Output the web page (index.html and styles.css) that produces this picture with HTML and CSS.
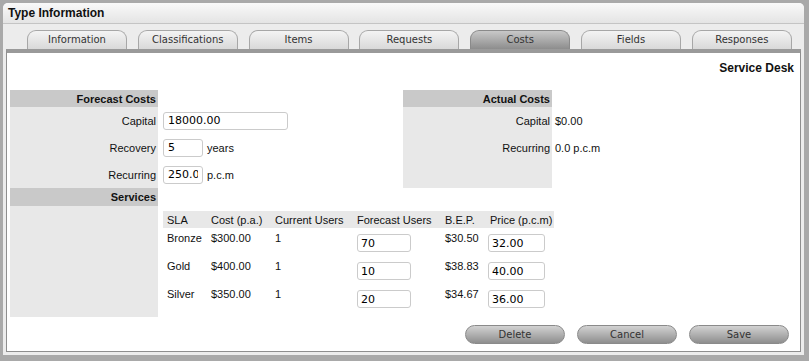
FILE: index.html
```html
<!DOCTYPE html>
<html>
  <head>
    <meta charset="utf-8">
    <title>Type Information</title>
    <link rel="stylesheet" href="styles.css">
  </head>
  <body>
    <div class="panel">
      <div class="panel-title">Type Information</div>
      <div class="tabs">
        <div class="tab">Information</div>
        <div class="tab">Classifications</div>
        <div class="tab">Items</div>
        <div class="tab">Requests</div>
        <div class="tab active">Costs</div>
        <div class="tab">Fields</div>
        <div class="tab">Responses</div>
      </div>
      <div class="content">
        <div class="context">Service Desk</div>

        <div class="costs">
          <div class="form forecast">
            <div class="label head">Forecast Costs</div>
            <div class="value"></div>
            <div class="label">Capital</div>
            <div class="value"><input class="wide" type="text" value="18000.00"></div>
            <div class="label">Recovery</div>
            <div class="value"><input class="short" type="text" value="5"> years</div>
            <div class="label">Recurring</div>
            <div class="value"><input class="short" type="text" value="250.00"> p.c.m</div>
          </div>
          <div class="form actual">
            <div class="label head">Actual Costs</div>
            <div class="value"></div>
            <div class="label">Capital</div>
            <div class="value text">$0.00</div>
            <div class="label">Recurring</div>
            <div class="value text">0.0 p.c.m</div>
            <div class="label"></div>
            <div class="value"></div>
          </div>
        </div>

        <div class="services">
          <div class="services-label">
            <div class="label head">Services</div>
          </div>
          <table class="sla">
            <tr>
              <th class="c-sla">SLA</th>
              <th class="c-cost">Cost (p.a.)</th>
              <th class="c-current">Current Users</th>
              <th class="c-forecast">Forecast Users</th>
              <th class="c-bep">B.E.P.</th>
              <th class="c-price">Price (p.c.m)</th>
            </tr>
            <tr>
              <td>Bronze</td>
              <td>$300.00</td>
              <td>1</td>
              <td><input class="users" type="text" value="70"></td>
              <td>$30.50</td>
              <td class="price"><input class="cost" type="text" value="32.00"></td>
            </tr>
            <tr>
              <td>Gold</td>
              <td>$400.00</td>
              <td>1</td>
              <td><input class="users" type="text" value="10"></td>
              <td>$38.83</td>
              <td class="price"><input class="cost" type="text" value="40.00"></td>
            </tr>
            <tr>
              <td>Silver</td>
              <td>$350.00</td>
              <td>1</td>
              <td><input class="users" type="text" value="20"></td>
              <td>$34.67</td>
              <td class="price"><input class="cost" type="text" value="36.00"></td>
            </tr>
          </table>
        </div>

        <div class="buttons">
          <button>Delete</button>
          <button>Cancel</button>
          <button>Save</button>
        </div>
      </div>
    </div>
  </body>
</html>
```

FILE: styles.css
```css
html {
  margin: 0;
  padding: 0;
}
body {
  --label-bg: #e8e8e8;
  --head-bg: #c9c9c9;
  margin: 0;
  padding: 3px 5px 6px 3px;
  background: #a9a9a9;
  color: #111;
  font: 11px "Liberation Sans", Arial, sans-serif;
  overflow: hidden;
}

.panel {
  background: #ececec;
  border-radius: 5px 5px 0 0;
  padding-bottom: 3px;
}
.panel-title {
  height: 20px;
  line-height: 21px;
  padding-left: 5px;
  font-weight: bold;
  font-size: 12px;
  color: #111;
  background: linear-gradient(#f9f9f9, #e4e4e4);
  border-bottom: 1px solid #c4c4c4;
  border-radius: 5px 5px 0 0;
}

.tabs {
  display: flex;
  gap: 10.8px;
  padding: 6px 0 0 24px;
}
.tab {
  box-sizing: border-box;
  width: 100px;
  height: 19px;
  padding-top: 3px;
  line-height: 16px;
  text-align: center;
  font: 10px "DejaVu Sans", Verdana, sans-serif;
  color: #333;
  background: linear-gradient(#f4f4f4, #d9d9d9);
  border: 1px solid #a7a7a7;
  border-bottom: none;
  border-radius: 9px 9px 0 0;
}
.tab.active {
  background: linear-gradient(#c8c8c8, #8d8d8d);
  border-color: #8a8a8a;
}

.content {
  margin: 0 3px;
  padding: 7px 0 7px 3px;
  background: #fff;
  border: 1px solid #8e8e8e;
  border-top: 4px solid #9a9a9a;
}
.context {
  text-align: right;
  font-weight: bold;
  font-size: 12px;
  line-height: 16px;
  padding-right: 6px;
  margin-bottom: 14px;
}

.costs {
  display: flex;
}
.form {
  display: grid;
  grid-template-rows: 17px 27px 27px 27px;
}
.forecast {
  width: 393px;
  grid-template-columns: 148px 1fr;
}
.actual {
  grid-template-columns: 149px 1fr;
}
.label {
  background: var(--label-bg);
  text-align: right;
  padding-right: 2px;
  display: flex;
  align-items: center;
  justify-content: flex-end;
}
.label.head {
  background: var(--head-bg);
  font-weight: bold;
}
.value {
  display: flex;
  align-items: center;
  gap: 4px;
  padding-left: 5px;
}
.value.text {
  padding-left: 3px;
}

input {
  box-sizing: border-box;
  height: 18px;
  margin: 0;
  padding: 0 4px;
  font: 11px "DejaVu Sans", Verdana, sans-serif;
  color: #000;
  background: #fff;
  border: 1px solid #cbcbcb;
  border-radius: 3px;
  outline: none;
}
input.wide {
  width: 125px;
}
input.short {
  width: 40px;
}

.services {
  display: flex;
}
.services-label {
  width: 148px;
  background: var(--label-bg);
}
.services-label .head {
  height: 18px;
}
.sla {
  border-collapse: collapse;
  margin: 23px 0 5px 5px;
  table-layout: fixed;
  width: 391px;
}
.sla th {
  background: var(--label-bg);
  font-weight: normal;
  text-align: left;
  height: 17px;
  padding: 0 0 0 4px;
  white-space: nowrap;
}
.sla td {
  vertical-align: top;
  padding: 4px 0 4px 4px;
  line-height: 13px;
  white-space: nowrap;
}
.sla td input {
  display: block;
  margin-top: 2px;
  padding: 0 3px;
}
.sla td.price {
  padding-left: 2px;
}
.c-sla { width: 40px; }
.c-cost { width: 60px; }
.c-current { width: 78px; }
.c-forecast { width: 84px; }
.c-bep { width: 41px; }
.c-price { width: 64px; }
input.users {
  width: 54px;
}
input.cost {
  width: 57px;
}

.buttons {
  display: flex;
  justify-content: flex-end;
  gap: 12px;
  margin-top: 8px;
  padding-right: 11px;
}
.buttons button {
  box-sizing: border-box;
  width: 100px;
  height: 19px;
  padding: 0;
  font: 10px "DejaVu Sans", Verdana, sans-serif;
  color: #333;
  background: linear-gradient(#d2d2d2, #8e8e8e);
  border: 1px solid #8a8a8a;
  border-radius: 10px;
}
```
